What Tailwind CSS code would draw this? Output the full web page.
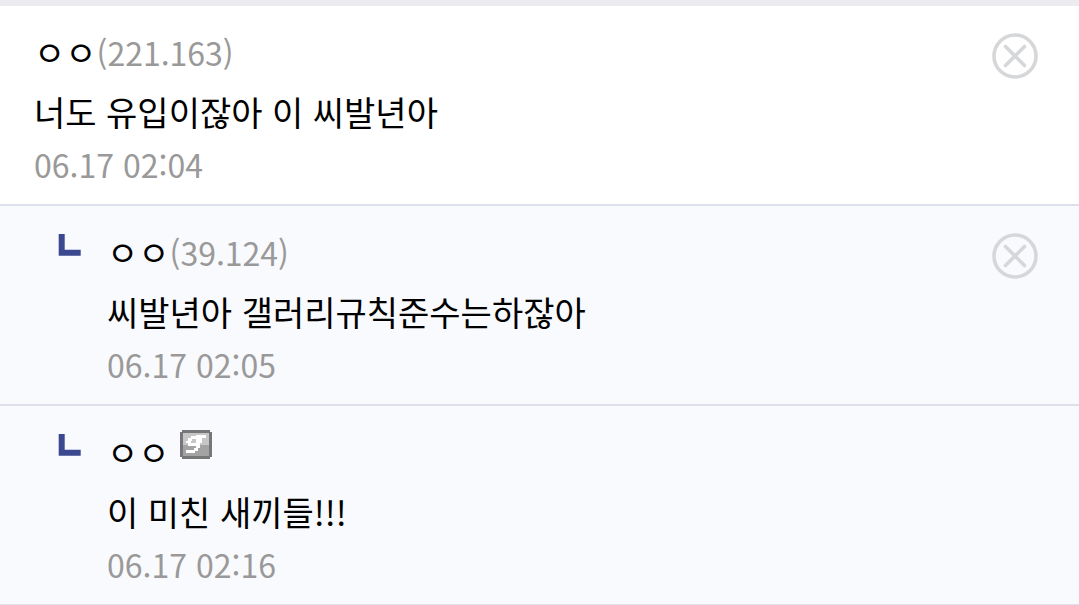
<!DOCTYPE html>
<html lang="ko">
<head>
  <meta charset="UTF-8" />
  <meta name="viewport" content="width=device-width, initial-scale=1.0"/>
  <title>댓글</title>
  <script src="https://cdn.jsdelivr.net/npm/@tailwindcss/browser@4"></script>
</head>
<body class="bg-white text-black font-['Noto_Sans_CJK_KR',sans-serif]">
  <ul class="border-t-6 border-[#ebebf0]">
    <!-- comment -->
    <li class="flex items-start justify-between border-b-2 border-[#dfe0eb] pl-[34px] pr-[41px] pt-5 pb-[18px]">
      <div>
        <div class="text-[34px] leading-[52px]">ㅇㅇ<span class="text-[32px] text-[#999]">(221.163)</span></div>
        <p class="mt-1 text-[34px] leading-[60px]">너도 유입이잖아 이 씨발년아</p>
        <time class="block text-[32px] leading-[44px] text-[#999]">06.17 02:04</time>
      </div>
      <button type="button" aria-label="삭제" class="mt-[7px]">
        <svg class="block size-[46px]" viewBox="0 0 46 46" fill="none" stroke="#d5d7d9" stroke-width="3.6">
          <circle cx="23" cy="23" r="21"/>
          <path d="M13.5 13.5l19 19M32.5 13.5l-19 19" stroke-linecap="round"/>
        </svg>
      </button>
    </li>

    <!-- replies -->
    <li class="flex items-start border-b-2 border-[#dfe0eb] bg-[#f9fafd] pl-[58px] pr-[41px] pt-5 pb-[18px]">
      <svg class="mt-2 mr-[26px] h-[22px] w-[23px] shrink-0" viewBox="0 0 23 22" fill="#3b4890">
        <path d="M.7 0h6v15.7h16v6H.7z"/>
      </svg>
      <div class="grow">
        <div class="text-[34px] leading-[52px]">ㅇㅇ<span class="text-[32px] text-[#999]">(39.124)</span></div>
        <p class="mt-1 text-[34px] leading-[60px]">씨발년아 갤러리규칙준수는하잖아</p>
        <time class="block text-[32px] leading-[44px] text-[#999]">06.17 02:05</time>
      </div>
      <button type="button" aria-label="삭제" class="mt-[7px]">
        <svg class="block size-[46px]" viewBox="0 0 46 46" fill="none" stroke="#d5d7d9" stroke-width="3.6">
          <circle cx="23" cy="23" r="21"/>
          <path d="M13.5 13.5l19 19M32.5 13.5l-19 19" stroke-linecap="round"/>
        </svg>
      </button>
    </li>

    <li class="flex items-start border-b-2 border-[#dfe0eb] bg-[#f9fafd] pl-[58px] pr-[41px] pt-5 pb-[18px]">
      <svg class="mt-2 mr-[26px] h-[22px] w-[23px] shrink-0" viewBox="0 0 23 22" fill="#3b4890">
        <path d="M.7 0h6v15.7h16v6H.7z"/>
      </svg>
      <div class="grow">
        <div class="flex items-start text-[34px] leading-[52px]">
          <span>ㅇㅇ</span>
          <svg class="mt-1 ml-[10px] h-[29px] w-8" viewBox="0 0 32 29" role="img" aria-label="고정닉">
            <path fill="#777" d="M2 0h28v2h2v25h-2v2H2v-2H0V2h2z"/>
            <path fill="#c6c6c6" d="M3 3h26v12H3z"/>
            <path fill="#a3a3a3" d="M3 15h26v11H3z"/>
            <path fill="#fff" fill-rule="evenodd" d="M16 5h10v3h-4v5h-2v5h-2v3h-3v2H6v-3h8v-2h2v-2H8v-3H6v-2h2V8h3V6h5zM12 9v2h-1v2h5V9z"/>
          </svg>
        </div>
        <p class="mt-1 text-[34px] leading-[60px]">이 미친 새끼들!!!</p>
        <time class="block text-[32px] leading-[44px] text-[#999]">06.17 02:16</time>
      </div>
    </li>
  </ul>
</body>
</html>
